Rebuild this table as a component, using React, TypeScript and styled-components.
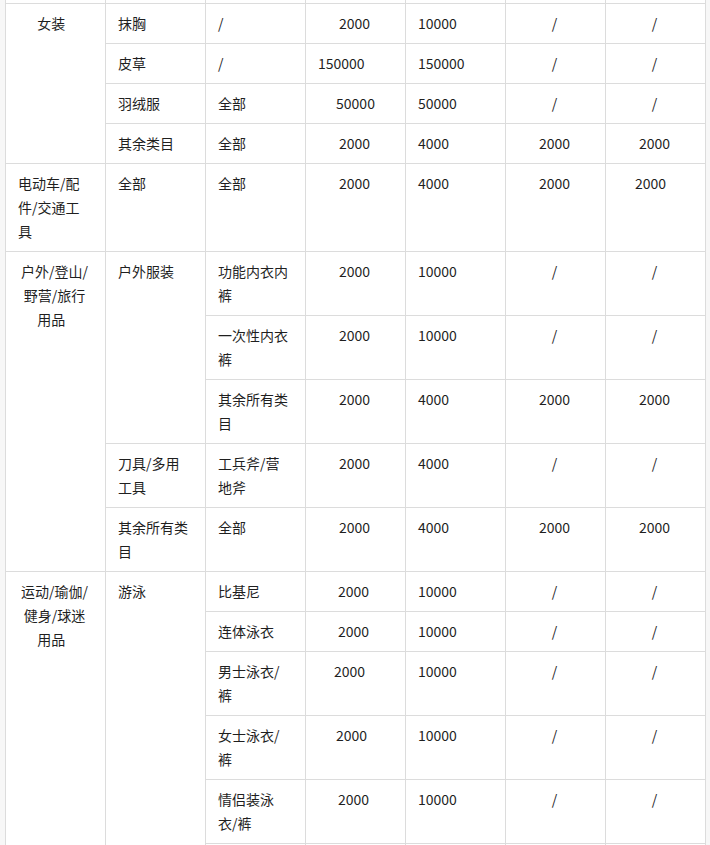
import styled, { createGlobalStyle } from 'styled-components'

const GlobalStyle = createGlobalStyle`
  html, body {
    margin: 0;
    padding: 0;
    background: #f7f7f7;
  }
  body {
    font-family: "Noto Sans CJK SC", "Noto Sans", sans-serif;
  }
`

// the table is scrolled a little: only the last 3px of the row above show
const Viewport = styled.div`
  height: 845px;
  overflow: hidden;
  padding: 0 4px 0 5px;
  background: #f7f7f7;
`

const Table = styled.table`
  width: 701px;
  margin-top: -36px;
  border-collapse: separate;
  border-spacing: 0;
  table-layout: fixed;
  background: #fff;
  border-left: 1px solid #dcdcdc;
  color: #1f1f1f;
  font-size: 14px;
  line-height: 24px;
`

type Align = 'left' | 'center'

const Cell = styled.td<{ $align?: Align; $nudge?: number }>`
  padding: 7px ${({ $nudge = 0 }) => 14 + $nudge * 2}px 8px 12px;
  border-right: 1px solid #dcdcdc;
  border-bottom: 1px solid #dcdcdc;
  vertical-align: top;
  text-align: ${({ $align = 'left' }) => $align};
  word-break: normal;
`

interface INums {
  low: string
  high: string
  a: string
  b: string
  lowAlign?: Align
  lowNudge?: number
  bNudge?: number
}

function Nums({ low, high, a, b, lowAlign = 'center', lowNudge, bNudge }: INums) {
  return (
    <>
      <Cell $align={lowAlign} $nudge={lowNudge}>{low}</Cell>
      <Cell>{high}</Cell>
      <Cell $align="center">{a}</Cell>
      <Cell $align="center" $nudge={bNudge}>{b}</Cell>
    </>
  )
}

const tail = '\u00a0\u00a0'
const blank = '\u00a0'

export default function App() {
  return (
    <>
      <GlobalStyle />
      <Viewport>
        <Table>
          <colgroup>
            {Array.from({ length: 7 }).map((_, i) => (
              <col key={i} style={{ width: 100 }} />
            ))}
          </colgroup>
          <tbody>
            <tr>
              <Cell $align="center">{blank}</Cell>
              <Cell>{blank}</Cell>
              <Cell>{blank}</Cell>
              <Nums low="" high="" a="" b="" />
            </tr>

            <tr>
              <Cell rowSpan={4} $align="center">女装{tail}</Cell>
              <Cell>抹胸</Cell>
              <Cell>/</Cell>
              <Nums low="2000" high="10000" a="/" b="/" />
            </tr>
            <tr>
              <Cell>皮草</Cell>
              <Cell>/</Cell>
              <Nums low="150000" lowAlign="left" high="150000" a="/" b="/" />
            </tr>
            <tr>
              <Cell>羽绒服</Cell>
              <Cell>全部</Cell>
              <Nums low="50000" lowNudge={-1} high="50000" a="/" b="/" />
            </tr>
            <tr>
              <Cell>其余类目</Cell>
              <Cell>全部</Cell>
              <Nums low="2000" high="4000" a="2000" b="2000" />
            </tr>

            <tr>
              <Cell>电动车/配件/交通工具</Cell>
              <Cell>全部</Cell>
              <Cell>全部</Cell>
              <Nums low="2000" high="4000" a="2000" b="2000" bNudge={4} />
            </tr>

            <tr>
              <Cell rowSpan={5} $align="center">户外/登山/野营/旅行用品{tail}</Cell>
              <Cell rowSpan={3}>户外服装</Cell>
              <Cell>功能内衣内裤</Cell>
              <Nums low="2000" high="10000" a="/" b="/" />
            </tr>
            <tr>
              <Cell>一次性内衣裤</Cell>
              <Nums low="2000" high="10000" a="/" b="/" />
            </tr>
            <tr>
              <Cell>其余所有类目</Cell>
              <Nums low="2000" high="4000" a="2000" b="2000" />
            </tr>
            <tr>
              <Cell>刀具/多用工具</Cell>
              <Cell>工兵斧/营地斧</Cell>
              <Nums low="2000" high="4000" a="/" b="/" />
            </tr>
            <tr>
              <Cell>其余所有类目</Cell>
              <Cell>全部</Cell>
              <Nums low="2000" high="4000" a="2000" b="2000" />
            </tr>

            <tr>
              <Cell rowSpan={6} $align="center">运动/瑜伽/健身/球迷用品{tail}</Cell>
              <Cell rowSpan={6}>游泳</Cell>
              <Cell>比基尼</Cell>
              <Nums low="2000" lowNudge={1} high="10000" a="/" b="/" />
            </tr>
            <tr>
              <Cell>连体泳衣</Cell>
              <Nums low="2000" lowNudge={1} high="10000" a="/" b="/" />
            </tr>
            <tr>
              <Cell>男士泳衣/裤</Cell>
              <Nums low="2000" lowNudge={5} high="10000" a="/" b="/" />
            </tr>
            <tr>
              <Cell>女士泳衣/裤</Cell>
              <Nums low="2000" lowNudge={3} high="10000" a="/" b="/" />
            </tr>
            <tr>
              <Cell>情侣装泳衣/裤</Cell>
              <Nums low="2000" lowNudge={1} high="10000" a="/" b="/" />
            </tr>
            {/* next row, only its top edge is inside the viewport */}
            <tr>
              <Cell>{blank}</Cell>
              <Nums low="" high="" a="" b="" />
            </tr>
          </tbody>
        </Table>
      </Viewport>
    </>
  )
}
